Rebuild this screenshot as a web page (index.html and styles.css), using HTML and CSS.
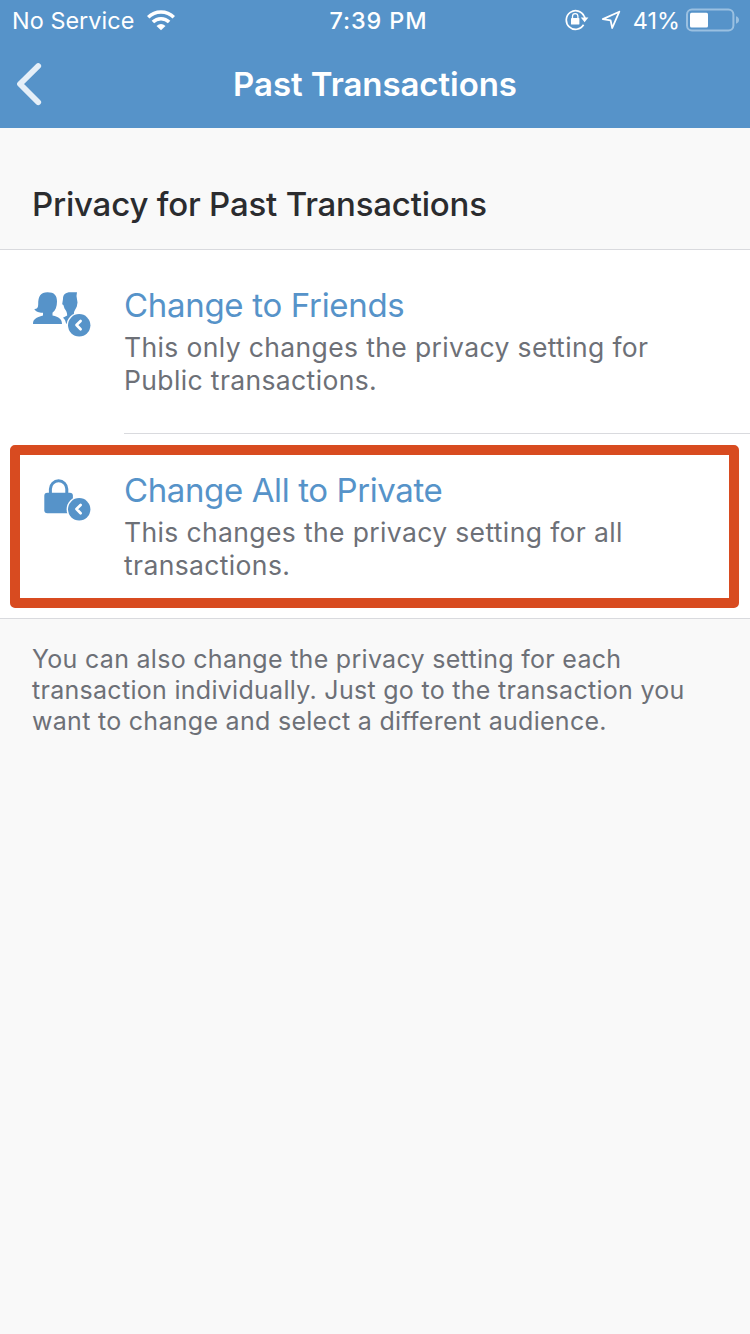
FILE: index.html
```html
<!DOCTYPE html>
<html lang="en">
<head>
<meta charset="utf-8">
<title>Past Transactions</title>
<link rel="stylesheet" href="styles.css">
</head>
<body>
<header class="header">
  <div class="status">
    <div class="status-left">
      <span class="carrier">No Service</span>
      <svg class="wifi" width="28" height="21" viewBox="0 0 28 21" fill="none" stroke="#fff" stroke-width="3.5">
        <path d="M1.2 7.2C8.3 .1 19.7 .1 26.8 7.2"/>
        <path d="M5.9 12C10.3 7.6 17.7 7.6 22.1 12"/>
        <path d="M9.5 15.9Q14 12 18.5 15.9L14 20.3Z" fill="#fff" stroke="none"/>
      </svg>
    </div>
    <span class="time">7:39 PM</span>
    <div class="status-right">
      <svg class="rotation" width="24" height="22" viewBox="0 0 24 22" fill="none" stroke="#fff">
        <path d="M19.2 7.5A9.3 9.3 0 1 0 18.6 15.8" stroke-width="1.7"/>
        <path d="M19.2 7.3Q20 8.4 20 9.5" stroke-width="1.6"/>
        <path d="M15.8 8.6H23.4L19.6 13.2Z" fill="#fff" stroke="none"/>
        <rect x="6" y="9" width="8.4" height="6.6" rx=".7" fill="#fff" stroke="none"/>
        <path d="M7.5 9.5V7.3A2.7 2.7 0 0 1 12.9 7.3V9.5" stroke-width="1.3"/>
      </svg>
      <svg class="location" width="20" height="20" viewBox="0 0 20 20" fill="none" stroke="#fff" stroke-width="1.8" stroke-linejoin="round">
        <path d="M18.3 1.7L1.8 9.1L9.6 10.4L11.2 18Z"/>
      </svg>
      <span class="percent">41%</span>
      <svg class="battery" width="54" height="24" viewBox="0 0 54 24">
        <rect x="1" y="1.4" width="46.4" height="21.2" rx="5" fill="none" stroke="#9ac0e1" stroke-width="2"/>
        <rect x="4" y="4.8" width="18" height="14.6" rx="1.5" fill="#fff"/>
        <path d="M50 8.3Q53 9.3 53 12T50 15.7Z" fill="#9ac0e1"/>
      </svg>
    </div>
  </div>
  <nav class="nav">
    <svg class="back" width="28" height="44" viewBox="0 0 28 44" fill="none" stroke="#e5eff8" stroke-width="5.8" stroke-linecap="round" stroke-linejoin="round">
      <path d="M23.2 4L5 22L23.2 40.2"/>
    </svg>
    <h1 class="title">Past Transactions</h1>
  </nav>
</header>
<main>
  <h2 class="section-title">Privacy for Past Transactions</h2>
  <div class="options">
    <div class="option">
      <svg class="icon" width="60" height="48" viewBox="0 0 60 48" fill="#5693c9">
        <path d="M1 34C1 29 4 27.5 11 25.5V22.7C8 22.8 4.5 22.5 2.2 19C4.8 19.2 6.2 17.8 6.2 14.5C6.2 6 8.5 2.2 15.5 2.2C22.5 2.2 25 5.5 25 11.5C25 16.5 23.5 20.7 20.5 22.7V25.5C27 27 30 29 30 34Z"/>
        <path d="M30.2 14.2L31 9C31 4.5 33.5 2.3 38.5 2.3H45L44.5 6L45.5 12.5L44.8 16.5C43.5 19.5 42 21 41.8 23.5L44 26L34.2 34C33.5 31 33 29.5 31 27.8L35.2 25.5C35.2 22 34 20.5 32.5 18.5L31.4 15Z"/>
        <circle cx="47.2" cy="35.3" r="12.6" fill="#fff"/>
        <circle cx="47.2" cy="35.3" r="11.2"/>
        <path d="M48.6 31L44.5 35L48.6 39.2" fill="none" stroke="#fff" stroke-width="2.7" stroke-linecap="round" stroke-linejoin="round"/>
      </svg>
      <div class="option-text">
        <div class="option-title friends">Change to Friends</div>
        <p class="option-desc">This only changes the privacy setting for<br>Public transactions.</p>
      </div>
    </div>
    <div class="option highlighted">
      <svg class="icon" width="60" height="48" viewBox="0 0 60 48" fill="#5693c9">
        <path d="M18.4 16.5V12A8.2 8.2 0 0 1 34.8 12V16.5" fill="none" stroke="#5693c9" stroke-width="3"/>
        <rect x="12.3" y="15.7" width="28.6" height="20.6" rx="3"/>
        <circle cx="47.2" cy="32.3" r="12.6" fill="#fff"/>
        <circle cx="47.2" cy="32.3" r="11.2"/>
        <path d="M48.6 28L44.5 32L48.6 36.2" fill="none" stroke="#fff" stroke-width="2.7" stroke-linecap="round" stroke-linejoin="round"/>
      </svg>
      <div class="option-text">
        <div class="option-title private">Change All to Private</div>
        <p class="option-desc">This changes the privacy setting for all<br>transactions.</p>
      </div>
    </div>
  </div>
  <p class="note">You can also change the privacy setting for each<br>transaction individually. Just go to the transaction you<br>want to change and select a different audience.</p>
</main>
</body>
</html>
```
FILE: styles.css
```css
* { box-sizing: border-box; }
body {
  margin: 0;
  min-height: 1334px;
  background: #f9f9f9;
  font-family: Inter, "Liberation Sans", sans-serif;
  color: #6d7077;
  white-space: nowrap;
}
h1, h2, p { margin: 0; }
svg { display: block; flex: none; }
.header { height: 128px; background: #5693c9; color: #fff; }
.status {
  display: grid;
  grid-template-columns: 1fr auto 1fr;
  align-items: center;
  height: 40px;
  padding: 0 10px 0 12px;
  font-size: 23.4px;
}
.status-left, .status-right { display: flex; align-items: center; }
.status-left { gap: 13px; }
.status-right { justify-content: flex-end; }
.carrier { letter-spacing: 0.05px; }
.time { font-weight: 500; letter-spacing: 0.9px; padding-left: 5px; }
.rotation { margin-right: 12px; }
.location { margin-right: 12px; }
.percent { margin-right: 6px; }
.nav {
  display: grid;
  grid-template-columns: 1fr auto 1fr;
  align-items: center;
  height: 88px;
  padding: 0 15px;
}
.title { font-size: 33px; font-weight: 600; line-height: 40px; letter-spacing: -0.06px; }
.section-title {
  height: 122px;
  padding: 56px 32px 0;
  border-bottom: 1px solid #d9dade;
  color: #2b2c2f;
  font-size: 33px;
  font-weight: 500;
  line-height: 40px;
  letter-spacing: -0.2px;
}
.options { background: #fff; border-bottom: 1px solid #d9dade; }
.option { display: flex; height: 184px; padding: 35px 0 0 32px; gap: 32px; }
.option-text { flex: 1; }
.option:first-child { position: relative; }
.option:first-child::after {
  content: "";
  position: absolute;
  left: 124px;
  right: 0;
  bottom: 0;
  height: 1px;
  background: #d9dade;
}
.icon { margin-top: 5px; }
.option-title { color: #5693c9; font-size: 33px; line-height: 40px; }
.friends { letter-spacing: -0.31px; }
.private { letter-spacing: -0.39px; }
.option-desc { margin-top: 6px; font-size: 26.5px; line-height: 33px; letter-spacing: 0.37px; }
.highlighted {
  height: 163px;
  margin: 11px 11px 10px 10px;
  padding: 15px 0 0 12px;
  border: 10px solid #d84b20;
  border-radius: 5px;
}
.highlighted .icon { margin-top: 7px; }
.note { padding: 25px 32px; font-size: 25px; line-height: 31px; letter-spacing: 0.29px; }
```
